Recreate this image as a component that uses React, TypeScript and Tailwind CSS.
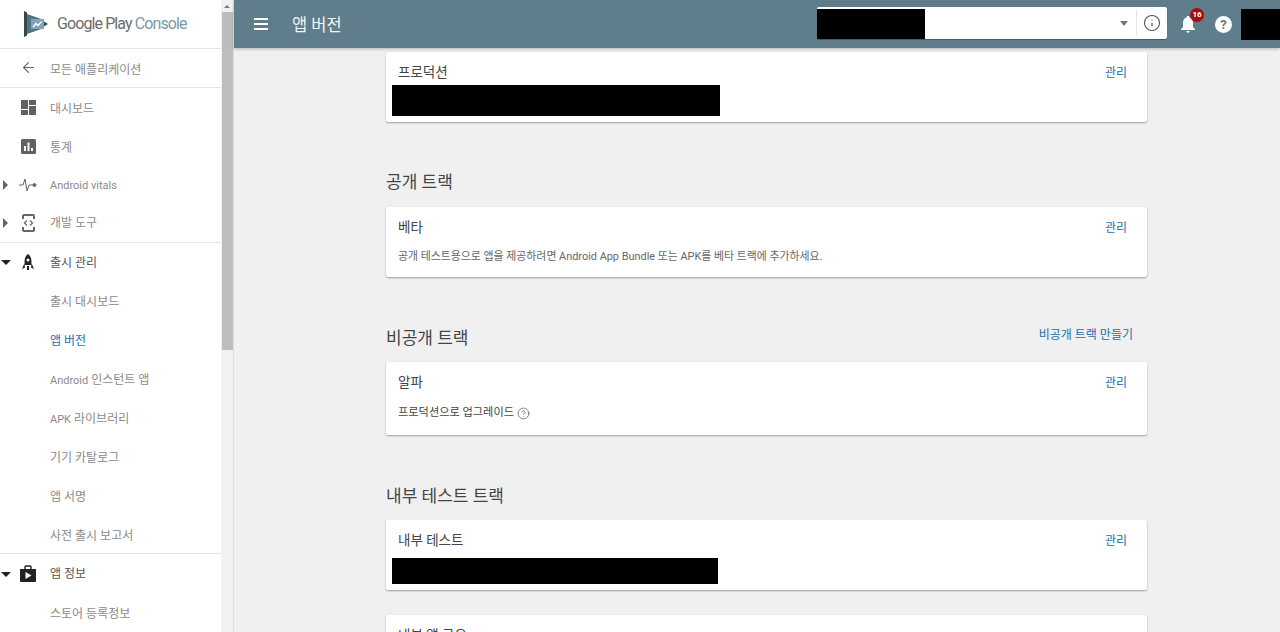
import { ArrowLeft, CircleHelp, Info } from 'lucide-react';
import type { ReactNode } from 'react';

const FONT = "font-['Roboto','Noto_Sans_CJK_KR',sans-serif]";

// Latin runs in the nav sit at 11px next to 12px hangul
const Latin = ({ children }: { children: ReactNode }) => <span className="text-[11px]">{children}</span>;

function NavRow({
  label,
  icon,
  caret,
  active,
  dark,
  height = 'h-[39px]',
  offset = 'pt-[3px]',
}: {
  label: ReactNode;
  icon?: ReactNode;
  caret?: 'right' | 'down';
  active?: boolean;
  dark?: boolean;
  height?: string;
  offset?: string;
}) {
  return (
    <div className={`relative flex items-center pl-[50px] text-[12px] ${height} ${offset} ${active ? 'text-[#1a6fb0]' : dark ? 'text-[#555]' : 'text-[#8a8a8a]'}`}>
      {caret === 'right' && <span className="absolute left-[3px] top-1/2 -mt-[5px] h-0 w-0 border-y-[5px] border-l-[5px] border-y-transparent border-l-[#666]" />}
      {caret === 'down' && <span className="absolute left-[1px] top-1/2 -mt-[2px] h-0 w-0 border-x-[5px] border-t-[5px] border-x-transparent border-t-[#222]" />}
      {icon && <span className="absolute left-[18px] top-1/2 flex h-5 w-5 -translate-y-1/2 items-center justify-center">{icon}</span>}
      <span>{label}</span>
    </div>
  );
}

function Sidebar() {
  return (
    <aside className="flex h-full w-[234px] shrink-0 border-r border-[#e0e0e0] bg-[#f1f1f1]">
      <div className="w-[221px] shrink-0 bg-white">
        <div className="flex h-[49px] items-center border-b border-[#e4e4e4] pl-6">
          <svg width="25" height="26" viewBox="0 0 25 26">
            <path d="M3 3 L20 9 V17 L3 23Z" fill="#4f7287" />
            <path d="M0 0 L3 1.5 V24.5 L0 26Z" fill="#37474f" />
            <path d="M20 10.5 L24 13 L20 15.5Z" fill="#37474f" />
            <path d="M7 8 H20 V18 H7Z" fill="#7fa3b8" />
            <path d="M9 16 L12 12.500 L14 14.500 L17.500 10.500" stroke="#fff" strokeWidth="1.3" fill="none" />
          </svg>
          <span className="ml-2 whitespace-nowrap font-['Roboto',sans-serif] text-[16px] tracking-[-0.9px] text-[#6d6d6d]">
            Google Play <span className="text-[#7b98a8]">Console</span>
          </span>
        </div>
        <div className="relative flex h-[39px] items-center border-b border-[#e4e4e4] pl-[50px] pt-[3px] text-[12px] text-[#8a8a8a]">
          <ArrowLeft className="absolute left-[20px] top-[10px] h-[17px] w-[17px] text-[#666]" strokeWidth={1.6} />
          모든 애플리케이션
        </div>
        <NavRow
          label="대시보드"
          icon={
            <svg width="15" height="15" viewBox="0 0 15 15" fill="#616161">
              <path d="M0 0 H7 V9 H0Z M0 10 H7 V15 H0Z M8 0 H15 V5 H8Z M8 6 H15 V15 H8Z" />
            </svg>
          }
        />
        <NavRow
          label="통계"
          icon={
            <svg width="15" height="15" viewBox="0 0 15 15">
              <rect width="15" height="15" rx="1.5" fill="#616161" />
              <path d="M3 7 H5 V12 H3Z M6.5 3.5 H8.5 V12 H6.5Z M10 9 H12 V12 H10Z" fill="#fff" />
            </svg>
          }
        />
        <NavRow
          label={<Latin>Android vitals</Latin>}
          caret="right"
          height="h-[38px]"
          offset="pt-0"
          icon={
            <svg width="18" height="14" viewBox="0 0 18 14" fill="none" stroke="#666" strokeWidth="1">
              <path d="M0 7 H4 L6 1 L8 13 L10 7 H14" />
              <circle cx="15.5" cy="7" r="1.5" fill="#666" />
            </svg>
          }
        />
        <NavRow
          label="개발 도구"
          caret="right"
          height="h-[38px]"
          offset="pt-0"
          icon={
            <svg width="13" height="18" viewBox="0 0 13 18" fill="none" stroke="#666" strokeWidth="1.6">
              <path d="M1 5 V2 Q1 1 2 1 H11 Q12 1 12 2 V5 M1 13 V16 Q1 17 2 17 H11 Q12 17 12 16 V13" strokeWidth="2" />
              <path d="M5 6.5 L2.5 9 L5 11.5 M8 6.5 L10.5 9 L8 11.5" strokeWidth="1.2" />
            </svg>
          }
        />
        <div className="border-t border-[#e4e4e4]">
          <NavRow
            label="출시 관리"
            caret="down"
            dark
            height="h-[38px]"
            offset="pt-[1px]"
            icon={
              <svg width="12" height="17" viewBox="0 0 12 17">
                <path d="M6 0 C9.5 2.5 10 7 9 11 H3 C2 7 2.5 2.5 6 0Z" fill="#222" />
                <circle cx="6" cy="6" r="1.5" fill="#fff" />
                <path d="M2.5 9 L0 15 L3 13.5Z M9.5 9 L12 15 L9 13.5Z M5 12 H7 V16 H5Z" fill="#222" />
              </svg>
            }
          />
          <NavRow label="출시 대시보드" />
          <NavRow label="앱 버전" active />
          <NavRow label={<><Latin>Android</Latin> 인스턴트 앱</>} />
          <NavRow label={<><Latin>APK</Latin> 라이브러리</>} />
          <NavRow label="기기 카탈로그" />
          <NavRow label="앱 서명" />
          <NavRow label="사전 출시 보고서" height="h-[38px]" />
        </div>
        <div className="border-t border-[#e4e4e4]">
          <NavRow
            label="앱 정보"
            caret="down"
            dark
            offset="pt-0"
            icon={
              <svg width="16" height="17" viewBox="0 0 16 17">
                <path d="M0 4 H16 V16 Q16 17 15 17 H1 Q0 17 0 16Z" fill="#222" />
                <path d="M5 4 V2 Q5 1 6 1 H10 Q11 1 11 2 V4" fill="none" stroke="#222" strokeWidth="1.4" />
                <path d="M5.5 7 L11.5 10.5 L5.5 14Z" fill="#fff" />
              </svg>
            }
          />
          <NavRow label="스토어 등록정보" />
        </div>
      </div>
      <div className="w-3 shrink-0">
        <div className="flex h-3 items-center justify-center">
          <span className="h-0 w-0 border-x-[3px] border-b-[3px] border-x-transparent border-b-[#777]" />
        </div>
        <div className="ml-px h-[338px] w-[11px] bg-[#bdbdbd]" />
      </div>
    </aside>
  );
}

function Header() {
  return (
    <header className="flex h-12 shrink-0 items-center bg-[#607d8b] text-white shadow-[0_1px_3px_rgba(0,0,0,0.25)]">
      <svg className="ml-5" width="14" height="12" viewBox="0 0 14 12" fill="#fff">
        <path d="M0 0 H14 V2 H0Z M0 5 H14 V7 H0Z M0 10 H14 V12 H0Z" />
      </svg>
      <h1 className="ml-6 pt-[5px] text-[16.5px] text-[#f2f5f6]">앱 버전</h1>
      <div className="ml-auto -mt-[2px] flex h-8 w-[350px] items-center rounded-[2px] bg-white shadow-[0_1px_1px_rgba(0,0,0,0.3)]">
        <div className="h-[30px] w-[108px] self-end bg-black" />
        <span className="ml-auto mr-[8px] h-0 w-0 border-x-[4px] border-t-[5px] border-x-transparent border-t-[#777]" />
        <div className="flex h-[26px] w-[31px] items-center justify-center border-l border-[#e5e5e5]">
          <Info className="h-[18px] w-[18px] text-[#555]" strokeWidth={1.5} />
        </div>
      </div>
      <div className="relative ml-[13px] flex h-8 w-[16px] items-center justify-center">
        <svg width="14" height="17" viewBox="0 0 14 17" fill="#fff">
          <path d="M7 0 C8 0 8.5 .7 8.5 1.5 C11 2.2 12 4.4 12 7 V11 L14 13.5 V14 H0 V13.5 L2 11 V7 C2 4.4 3 2.2 5.500 1.5 C5.500 .7 6 0 7 0Z" />
          <path d="M5.300 15 H8.700 A1.700 1.700 0 0 1 5.300 15Z" />
        </svg>
        <span className="absolute -right-[8px] top-0 flex h-[14px] w-[14px] items-center justify-center rounded-full bg-[#a50e0e] text-[8px] font-bold leading-none">16</span>
      </div>
      <div className="ml-[19px] flex h-[17px] w-[17px] items-center justify-center rounded-full bg-white text-[13px] font-bold leading-none text-[#607d8b]">?</div>
      <div className="ml-[9px] h-[31px] w-[39px] bg-black" />
    </header>
  );
}

function Card({
  title,
  manage = true,
  className,
  children,
}: {
  title: string;
  manage?: boolean;
  className: string;
  children?: ReactNode;
}) {
  return (
    <section className={`rounded-[2px] bg-white shadow-[0_1px_2px_rgba(0,0,0,0.35)] ${className}`}>
      <div className="flex h-[41px] items-center justify-between pl-[12px] pr-[20px]">
        <span className="text-[13.5px] text-[#444]">{title}</span>
        {manage && <span className="pt-[1px] text-[12px] text-[#1a6fb0]">관리</span>}
      </div>
      {children}
    </section>
  );
}

function TrackHeading({ title, action, className }: { title: string; action?: string; className: string }) {
  return (
    <div className={`flex items-center justify-between pr-[14px] ${className}`}>
      <h2 className="pt-[3px] text-[17px] text-[#444]">{title}</h2>
      {action && <span className="-mt-[4px] text-[12px] text-[#1a6fb0]">{action}</span>}
    </div>
  );
}

export default function App() {
  return (
    <div className={`flex h-[632px] w-[1280px] overflow-hidden bg-[#f0f0f0] ${FONT}`}>
      <Sidebar />
      <div className="flex min-w-0 flex-1 flex-col">
        <Header />
        <main className="min-h-0 flex-1 overflow-hidden pl-[152px] pt-[4px]">
          <div className="w-[761px]">
            <Card title="프로덕션" className="h-[70px]">
              <div className="-mt-[8px] ml-[6px] h-[31px] w-[328px] bg-black" />
            </Card>
            <TrackHeading title="공개 트랙" className="mt-[47px] h-[24px]" />
            <Card title="베타" className="mt-[14px] h-[70px]">
              <p className="pl-[12px] pt-px text-[10.900px] text-[#666]">
                공개 테스트용으로 앱을 제공하려면 Android App Bundle 또는 APK를 베타 트랙에 추가하세요.
              </p>
            </Card>
            <TrackHeading title="비공개 트랙" action="비공개 트랙 만들기" className="mt-[48px] h-[24px]" />
            <Card title="알파" className="mt-[13px] h-[73px]">
              <div className="flex items-center gap-[3px] pl-[12px] pt-[2px] text-[11.200px] text-[#444]">
                프로덕션으로 업그레이드
                <CircleHelp className="h-[13px] w-[13px] text-[#666]" strokeWidth={1.5} />
              </div>
            </Card>
            <TrackHeading title="내부 테스트 트랙" className="mt-[48px] h-[24px]" />
            <Card title="내부 테스트" className="mt-[13px] h-[70px]">
              <div className="-mt-[3px] ml-[6px] h-[26px] w-[326px] bg-black" />
            </Card>
            <Card title="내부 앱 공유" manage={false} className="mt-[25px] h-[70px]" />
          </div>
        </main>
      </div>
    </div>
  );
}
